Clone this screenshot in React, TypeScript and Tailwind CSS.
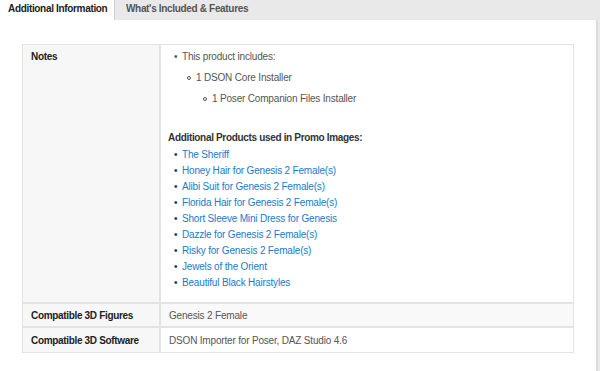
import React from "react";

const links = [
  "The Sheriff",
  "Honey Hair for Genesis 2 Female(s)",
  "Alibi Suit for Genesis 2 Female(s)",
  "Florida Hair for Genesis 2 Female(s)",
  "Short Sleeve Mini Dress for Genesis",
  "Dazzle for Genesis 2 Female(s)",
  "Risky for Genesis 2 Female(s)",
  "Jewels of the Orient",
  "Beautiful Black Hairstyles",
];

const bold = "font-bold tracking-[-0.33px]";

export default function App() {
  return (
    <div
      className="w-[600px] h-[371px] overflow-hidden bg-[#e9e9e9] text-[10px] tracking-[-0.18px] text-[#555]"
      style={{ fontFamily: '"Liberation Sans", Arial, sans-serif' }}
    >
      <div className="flex h-[20px] whitespace-nowrap">
        <div className={`w-[115px] bg-white ${bold} text-[#222] pl-[8px] leading-[17px] border-r border-[#d0d0d0]`}>
          Additional Information
        </div>
        <div className={`pl-[11px] ${bold} text-[#555] leading-[17px]`}>
          What's Included &amp; Features
        </div>
      </div>
      <div className="w-[598px] h-[351px] bg-white border-r-2 border-[#dcdcdc] rounded-tr-[3px] pt-[24px] pl-[22px]">
        <div className="w-[552px] border border-[#e3e3e3]">
          <div className="flex border-b-2 border-[#e3e3e3]">
            <div className={`w-[138px] shrink-0 bg-[#f7f7f7] border-r-2 border-[#e3e3e3] pl-[8px] pt-[4px] ${bold} text-[#222]`}>
              Notes
            </div>
            <div className="flex-1 pl-[7px] pt-[5px] pb-[10px]">
              <div className="flex items-start leading-[13px]">
                <span className="w-[14px] pl-[6px]">•</span>
                <span>This product includes:</span>
              </div>
              <div className="flex items-center leading-[13px] mt-[8px] pl-[19px]">
                <span className="w-[9px] h-[4px] flex items-center"><span className="block w-[4px] h-[4px] rounded-full border border-[#555]"></span></span>
                <span>1 DSON Core Installer</span>
              </div>
              <div className="flex items-center leading-[13px] mt-[8px] pl-[35px]">
                <span className="w-[9px] h-[4px] flex items-center"><span className="block w-[4px] h-[4px] rounded-full border border-[#555]"></span></span>
                <span>1 Poser Companion Files Installer</span>
              </div>
              <div className={`mt-[26px] ${bold} text-[#333] leading-[13px]`}>
                Additional Products used in Promo Images:
              </div>
              <div className="mt-[4px]">
                {links.map((l) => (
                  <div key={l} className="flex items-start leading-[13px] h-[16px]">
                    <span className="w-[14px] pl-[6px] text-[#333]">•</span>
                    <span className="text-[#1a7bcb]">{l}</span>
                  </div>
                ))}
              </div>
            </div>
          </div>
          <div className="flex h-[24px] border-b-2 border-[#e3e3e3] bg-[#f9f9f9]">
            <div className={`w-[138px] shrink-0 bg-[#f7f7f7] border-r-2 border-[#e3e3e3] pl-[8px] ${bold} text-[#222] flex items-center`}>
              Compatible 3D Figures
            </div>
            <div className="flex-1 pl-[8px] flex items-center">Genesis 2 Female</div>
          </div>
          <div className="flex h-[24px]">
            <div className={`w-[138px] shrink-0 bg-[#f7f7f7] border-r-2 border-[#e3e3e3] pl-[8px] ${bold} text-[#222] flex items-center`}>
              Compatible 3D Software
            </div>
            <div className="flex-1 pl-[8px] flex items-center">DSON Importer for Poser, DAZ Studio 4.6</div>
          </div>
        </div>
      </div>
    </div>
  );
}
